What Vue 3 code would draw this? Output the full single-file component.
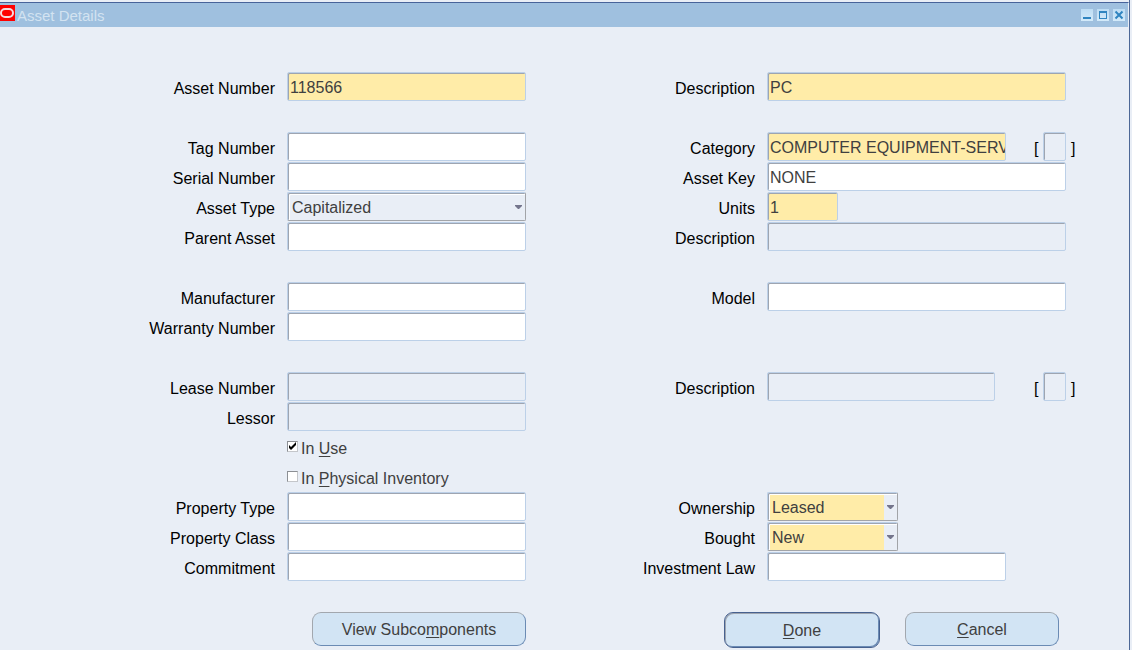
<script setup>
import { reactive } from 'vue'

const left = reactive([
  [{ id: 'asset-number', label: 'Asset Number', value: '118566', tone: 'required' }],
  [
    { id: 'tag-number', label: 'Tag Number', value: '' },
    { id: 'serial-number', label: 'Serial Number', value: '' },
    { id: 'asset-type', label: 'Asset Type', value: 'Capitalized', kind: 'select', tone: 'plain', options: ['Capitalized', 'CIP', 'Expensed'] },
    { id: 'parent-asset', label: 'Parent Asset', value: '' },
  ],
  [
    { id: 'manufacturer', label: 'Manufacturer', value: '' },
    { id: 'warranty-number', label: 'Warranty Number', value: '' },
  ],
  [
    { id: 'lease-number', label: 'Lease Number', value: '', tone: 'locked' },
    { id: 'lessor', label: 'Lessor', value: '', tone: 'locked' },
    { id: 'in-use', kind: 'check', text: ['In ', 'U', 'se'], value: true },
    { id: 'in-physical-inventory', kind: 'check', text: ['In ', 'P', 'hysical Inventory'], value: false },
    { id: 'property-type', label: 'Property Type', value: '' },
    { id: 'property-class', label: 'Property Class', value: '' },
    { id: 'commitment', label: 'Commitment', value: '' },
  ],
])

const right = reactive([
  [{ id: 'description', label: 'Description', value: 'PC', tone: 'required' }],
  [
    { id: 'category', label: 'Category', value: 'COMPUTER EQUIPMENT-SERV', tone: 'required', size: 'medium', flex: true },
    { id: 'asset-key', label: 'Asset Key', value: 'NONE' },
    { id: 'units', label: 'Units', value: '1', tone: 'required', size: 'tiny' },
    { id: 'parent-description', label: 'Description', value: '', tone: 'locked' },
  ],
  [
    { id: 'model', label: 'Model', value: '' },
    { kind: 'blank' },
  ],
  [
    { id: 'lease-description', label: 'Description', value: '', tone: 'locked', size: 'short', flex: true },
    { kind: 'blank' },
    { kind: 'blank' },
    { kind: 'blank' },
    { id: 'ownership', label: 'Ownership', value: 'Leased', kind: 'select', tone: 'required', size: 'small', options: ['Leased', 'Owned'] },
    { id: 'bought', label: 'Bought', value: 'New', kind: 'select', tone: 'required', size: 'small', options: ['New', 'Used'] },
    { id: 'investment-law', label: 'Investment Law', value: '', size: 'medium' },
  ],
])

const sides = [
  { name: 'left', groups: left },
  { name: 'right', groups: right },
]
</script>

<template>
  <main class="window">
    <header class="bar">
      <svg class="brand" viewBox="0 0 15 20" aria-hidden="true">
        <rect width="15" height="16" fill="#ff0000" />
        <rect x="1" y="4" width="12" height="8" rx="4" fill="none" stroke="#f6d9dc" stroke-width="2" />
      </svg>
      <h1>Asset Details</h1>
      <div class="tools">
        <button type="button" aria-label="Minimize">
          <svg viewBox="0 0 12 12"><rect x="2" y="8" width="8" height="2" fill="#2f84c0" /></svg>
        </button>
        <button type="button" aria-label="Maximize">
          <svg viewBox="0 0 12 12"><path d="M2 2h8v8H2zM3 4v5h6V4z" fill="#2f84c0" fill-rule="evenodd" /></svg>
        </button>
        <button type="button" aria-label="Close">
          <svg viewBox="0 0 12 12"><path d="M2.500 2.500L9.500 9.500M9.500 2.500L2.500 9.500" stroke="#2f84c0" stroke-width="2" /></svg>
        </button>
      </div>
    </header>

    <form class="form" @submit.prevent>
      <div v-for="side in sides" :key="side.name" class="side" :class="side.name">
        <div v-for="(group, g) in side.groups" :key="g" class="group">
          <div v-for="(f, i) in group" :key="i" class="row">
            <label v-if="f.label" class="label" :for="f.id">{{ f.label }}</label>

            <div v-if="f.kind === 'check'" class="cell check">
              <span class="box">
                <input :id="f.id" v-model="f.value" type="checkbox" />
                <svg v-if="f.value" viewBox="0 0 7 7" aria-hidden="true">
                  <path d="M0 2v3l2 2 5-5V-1L2 4z" fill="#000" />
                </svg>
              </span>
              <label :for="f.id">{{ f.text[0] }}<u>{{ f.text[1] }}</u>{{ f.text[2] }}</label>
            </div>

            <div v-else-if="f.kind === 'select'" class="cell">
              <div class="picker" :class="[f.tone, f.size]">
                <select :id="f.id" v-model="f.value">
                  <option v-for="o in f.options" :key="o">{{ o }}</option>
                </select>
                <svg viewBox="0 0 7 4" aria-hidden="true"><path d="M0 0h7v1L4 4H3L0 1z" fill="#74758c" /></svg>
              </div>
            </div>

            <div v-else-if="f.id" class="cell" :class="{ wide: f.flex }">
              <input :id="f.id" v-model="f.value" class="field" :class="[f.tone, f.size]" type="text" :readonly="f.tone === 'locked'" />
              <div v-if="f.flex" class="flexfield">
                <span>[</span>
                <input class="field locked" type="text" readonly :aria-label="f.label + ' flexfield'" />
                <span>]</span>
              </div>
            </div>
          </div>
        </div>
      </div>

      <div class="actions">
        <button type="button" class="action view">View Subco<u>m</u>ponents</button>
      </div>
      <div class="actions end">
        <button type="submit" class="action done"><u>D</u>one</button>
        <button type="button" class="action"><u>C</u>ancel</button>
      </div>
    </form>
  </main>
</template>

<style>
body {
  background: #e9eef6;
}
</style>

<style scoped>
* {
  box-sizing: border-box;
}
.window {
  min-height: 100vh;
  padding-top: 2px;
  border-right: 1px solid #4d6796;
  margin-right: 2px;
  background: #e9eef6;
  color: #000;
  font: 16px/20px "Liberation Sans", Arial, sans-serif;
}
.bar {
  display: flex;
  align-items: center;
  height: 25px;
  border-top: 1px solid #47639a;
  border-right: 1px solid #e9eef6;
  background: #9fc0df;
  padding-right: 3px;
}
.brand {
  width: 15px;
  height: 20px;
}
h1 {
  flex: 1;
  margin: 0;
  padding: 1px 0 0 2px;
  font-size: 15px;
  line-height: 20px;
  font-weight: normal;
  color: #d3e3f1;
}
.tools {
  display: flex;
  gap: 4px;
}
.tools button {
  width: 12px;
  height: 12px;
  padding: 0;
  border: 0;
  background: linear-gradient(#bddcf4, #d3eafa);
}
.tools svg {
  display: block;
  width: 12px;
  height: 12px;
}
.form {
  display: grid;
  grid-template-columns: 526fr 603fr;
  row-gap: 30px;
  padding-top: 45px;
}
.side,
.group {
  display: flex;
  flex-direction: column;
}
.side {
  gap: 30px;
}
.row {
  display: grid;
  column-gap: 12px;
  align-items: start;
  height: 30px;
}
.left .row {
  grid-template-columns: 275fr 239fr;
}
.right .row {
  grid-template-columns: 229fr 299fr 51fr;
}
.label {
  grid-column: 1;
  padding-top: 7px;
  text-align: right;
  white-space: nowrap;
}
.cell {
  grid-column: 2;
  display: flex;
  min-width: 0;
}
.wide {
  grid-column: 2 / -1;
}
.field {
  width: 100%;
  min-width: 0;
  height: 29px;
  padding: 2px 0 0 2px;
  border: 1px solid #bcd0e8;
  border-radius: 2px;
  box-shadow: inset 1px 1px #9ea5b1;
  background: #fff;
  color: #404040;
  font: inherit;
  outline: 0;
}
.field.required {
  background: #ffeca8;
}
.field.locked {
  background: #e9eef6;
}
.medium {
  width: 239px;
}
.short {
  width: 228px;
}
.small {
  width: 131px;
}
.tiny {
  width: 71px;
}
.flexfield {
  display: flex;
  gap: 5px;
  margin-left: auto;
  padding-right: 54px;
}
.flexfield span {
  width: 4px;
  padding-top: 7px;
}
.flexfield .field {
  width: 23px;
}
.picker {
  position: relative;
  height: 29px;
  border: 1px solid #a2a4a8;
  border-top-color: #bcd0e8;
  border-left-color: #bcd0e8;
  border-radius: 2px;
  box-shadow: inset 1px 1px #9ea5b1, inset 2px 2px #fff;
  padding: 2px 0 0 2px;
}
.picker.plain {
  width: 100%;
}
.picker select {
  appearance: none;
  display: block;
  width: 100%;
  height: 25px;
  padding: 1px 14px 0 2px;
  border: 0;
  background: transparent;
  color: #404040;
  font: inherit;
  outline: 0;
}
.picker.required select {
  background: linear-gradient(90deg, #ffeca8 calc(100% - 13px), transparent calc(100% - 13px));
}
.picker svg {
  position: absolute;
  right: 3px;
  top: 12px;
  width: 7px;
  height: 4px;
  pointer-events: none;
}
.check {
  gap: 3px;
  color: #404040;
}
.check label {
  padding-top: 7px;
  white-space: nowrap;
}
.box {
  display: grid;
  place-items: center;
  align-self: flex-start;
  padding-top: 9px;
}
.box > * {
  grid-area: 1 / 1;
}
.box input {
  appearance: none;
  width: 11px;
  height: 11px;
  margin: 0;
  border: 1px solid #8c8f94;
  border-right-color: #c4c6ca;
  border-bottom-color: #c4c6ca;
  background: #fff;
}
.box svg {
  width: 7px;
  height: 7px;
  overflow: visible;
  pointer-events: none;
}
u {
  text-decoration: underline;
  text-decoration-thickness: 1px;
  text-underline-offset: 2px;
}
.actions {
  display: flex;
  align-items: flex-start;
  justify-content: flex-end;
  gap: 25px;
}
.actions.end {
  padding-right: 70px;
}
.action {
  width: 154px;
  height: 34px;
  padding: 2px 0 0;
  border: 1px solid #a2a7ae;
  border-right-color: #6b8bb4;
  border-bottom-color: #6b8bb4;
  border-radius: 9px;
  background: #d2e4f4;
  color: #404040;
  font: inherit;
}
.view {
  width: 214px;
}
.done {
  width: 156px;
  height: 36px;
  border: 1px solid #47618f;
  box-shadow: inset 1px 1px #9ea5b1, inset -1px -1px #6b8bb4;
}
</style>
